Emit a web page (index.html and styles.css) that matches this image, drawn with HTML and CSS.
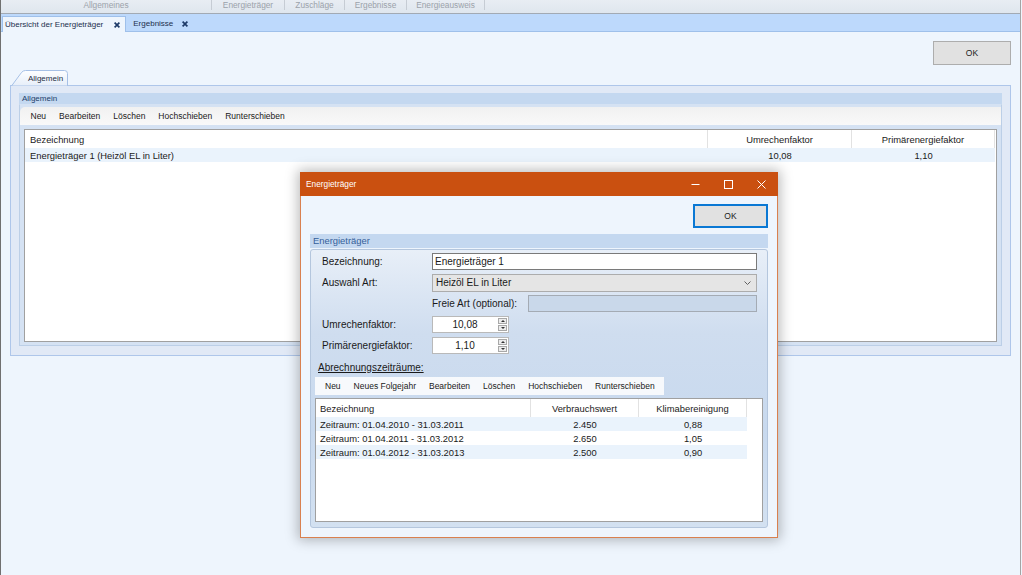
FILE: index.html
```html
<!DOCTYPE html>
<html>
  <head>
    <meta charset="UTF-8" />
    <title>Übersicht der Energieträger</title>
    <link rel="stylesheet" href="styles.css">
  </head>
  <body>
    <div class="app">
      <!-- Ribbon page strip -->
      <div class="menubar">
        <span class="menu-item menu-general">Allgemeines</span>
        <span class="menu-item menu-carrier">Energieträger</span>
        <span class="menu-item menu-extra">Zuschläge</span>
        <span class="menu-item menu-results">Ergebnisse</span>
        <span class="menu-item menu-cert">Energieausweis</span>
      </div>

      <!-- Document tabs -->
      <div class="doc-tabs">
        <div class="doc-tab active">
          <span>Übersicht der Energieträger</span>
          <svg class="tab-close" viewBox="0 0 6 6"><path d="M0.6 0.6 L5.4 5.4 M5.4 0.6 L0.6 5.4"/></svg>
        </div>
        <div class="doc-tab second">
          <span>Ergebnisse</span>
          <svg class="tab-close" viewBox="0 0 6 6"><path d="M0.6 0.6 L5.4 5.4 M5.4 0.6 L0.6 5.4"/></svg>
        </div>
      </div>

      <div class="workspace">
        <div class="top-actions">
          <button class="btn">OK</button>
        </div>

        <div class="tabctl">
          <div class="tabctl-head">
            <div class="tabctl-tab">
              <svg class="tab-shape" viewBox="0 0 57 16" preserveAspectRatio="none">
                <defs>
                  <linearGradient id="tabfill" x1="0" y1="0" x2="0" y2="1">
                    <stop offset="0" stop-color="#fdfeff"/>
                    <stop offset="1" stop-color="#e6eef9"/>
                  </linearGradient>
                </defs>
                <path d="M0.5 16 L10.5 2.5 Q12 0.5 14.5 0.5 L53.5 0.5 Q56.5 0.5 56.5 3.5 L56.5 16 Z" fill="url(#tabfill)" stroke="#a6c0e6"/>
              </svg>
              <span class="tab-label">Allgemein</span>
            </div>
          </div>
          <div class="tabctl-page">
            <div class="group-title">Allgemein</div>
            <div class="group-body">
              <div class="toolbar main-toolbar">
                <span class="tool">Neu</span>
                <span class="tool">Bearbeiten</span>
                <span class="tool">Löschen</span>
                <span class="tool">Hochschieben</span>
                <span class="tool">Runterschieben</span>
              </div>
              <div class="grid main-grid">
                <table>
                  <tr>
                    <th class="left col-name">Bezeichnung</th>
                    <th class="col-factor">Umrechenfaktor</th>
                    <th class="col-primary">Primärenergiefaktor</th>
                  </tr>
                  <tr class="alt">
                    <td class="left">Energieträger 1 (Heizöl EL in Liter)</td>
                    <td>10,08</td>
                    <td>1,10</td>
                  </tr>
                </table>
              </div>
            </div>
          </div>
        </div>
      </div>

      <!-- Modal dialog -->
      <div class="dialog">
        <div class="dlg-title">
          <span class="dlg-caption">Energieträger</span>
          <div class="dlg-controls">
            <span class="ctl"><svg viewBox="0 0 9 9"><path d="M0.5 4.5 H8.5"/></svg></span>
            <span class="ctl"><svg viewBox="0 0 9 9"><rect x="0.5" y="0.5" width="8" height="8"/></svg></span>
            <span class="ctl"><svg viewBox="0 0 9 9"><path d="M0.5 0.5 L8.5 8.5 M8.5 0.5 L0.5 8.5"/></svg></span>
          </div>
        </div>

        <div class="dlg-body">
          <div class="dlg-actions">
            <button class="btn btn-focus">OK</button>
          </div>
          <div class="group-title dlg-group">Energieträger</div>
          <div class="dlg-panel">
            <div class="form-row">
              <label class="form-label">Bezeichnung:</label>
              <div class="textbox wide">Energieträger 1</div>
            </div>
            <div class="form-row">
              <label class="form-label">Auswahl Art:</label>
              <div class="combo wide">
                <span>Heizöl EL in Liter</span>
                <svg class="combo-arrow" viewBox="0 0 7 4"><path d="M0.5 0.5 L3.5 3.5 L6.5 0.5"/></svg>
              </div>
            </div>
            <div class="form-row">
              <span class="form-label"></span>
              <label class="free-label">Freie Art (optional):</label>
              <div class="textbox disabled free"></div>
            </div>
            <div class="form-row">
              <label class="form-label">Umrechenfaktor:</label>
              <div class="spin">
                <span class="spin-value">10,08</span>
                <span class="spin-btns"><span class="spin-up"></span><span class="spin-down"></span></span>
              </div>
            </div>
            <div class="form-row">
              <label class="form-label">Primärenergiefaktor:</label>
              <div class="spin">
                <span class="spin-value">1,10</span>
                <span class="spin-btns"><span class="spin-up"></span><span class="spin-down"></span></span>
              </div>
            </div>

            <div class="section-label">Abrechnungszeiträume:</div>

            <div class="toolbar dlg-toolbar">
              <span class="tool">Neu</span>
              <span class="tool">Neues Folgejahr</span>
              <span class="tool">Bearbeiten</span>
              <span class="tool">Löschen</span>
              <span class="tool">Hochschieben</span>
              <span class="tool">Runterschieben</span>
            </div>

            <div class="grid dlg-grid">
              <table>
                <tr>
                  <th class="left col-period">Bezeichnung</th>
                  <th class="col-usage">Verbrauchswert</th>
                  <th class="col-climate">Klimabereinigung</th>
                </tr>
                <tr class="alt">
                  <td class="left">Zeitraum: 01.04.2010 - 31.03.2011</td>
                  <td>2.450</td>
                  <td>0,88</td>
                </tr>
                <tr>
                  <td class="left">Zeitraum: 01.04.2011 - 31.03.2012</td>
                  <td>2.650</td>
                  <td>1,05</td>
                </tr>
                <tr class="alt">
                  <td class="left">Zeitraum: 01.04.2012 - 31.03.2013</td>
                  <td>2.500</td>
                  <td>0,90</td>
                </tr>
              </table>
            </div>
          </div>
        </div>
      </div>
    </div>
  </body>
</html>
```

FILE: styles.css
```css
/* Reset */
html, body {
  margin: 0;
  padding: 0;
  width: 100%;
  height: 100%;
  overflow: hidden;
  background: #eef5fd;
  font-family: "Liberation Sans", Arial, sans-serif;
  color: #1a1a1a;
}

.app {
  position: relative;
  width: 1021px;
  height: 575px;
  box-sizing: border-box;
  border-left: 1px solid #707070;
  border-right: 1px solid #a4a4a4;
  background: #eef5fd;
}

/* Ribbon page strip */
.menubar {
  display: flex;
  height: 13px;
  background: linear-gradient(#e8edf3, #dfe6ee);
  border-bottom: 1px solid #a2aab4;
  font-size: 8.3px;
  color: #9ba2aa;
}

.menu-item {
  display: flex;
  justify-content: center;
  align-items: center;
  height: 10px;
  border-right: 1px solid #c6ccd4;
  box-sizing: border-box;
}

.menu-general { width: 211px; }
.menu-carrier { width: 73px; }
.menu-extra { width: 60px; }
.menu-results { width: 62px; }
.menu-cert { width: 78px; }

/* Document tabs */
.doc-tabs {
  display: flex;
  align-items: flex-end;
  height: 17px;
  background: #bdd9fc;
  border-bottom: 1px solid #9fc0ea;
  font-size: 8px;
}

.doc-tab {
  display: flex;
  align-items: center;
  height: 15px;
  margin-left: 1px;
  padding: 0 4px 0 6px;
  color: #1c2f4d;
}

.doc-tab.active {
  margin-bottom: -1px;
  padding: 0 5px 0 2px;
  background: #eef5fd;
  border: 1px solid #9fc0ea;
  border-bottom: none;
  height: 15px;
}

.tab-close {
  width: 6px;
  height: 6px;
  margin-left: 11px;
  stroke: #1d3a68;
  stroke-width: 1.7;
  fill: none;
}

.doc-tab.second .tab-close { margin-left: 9px; }

/* Workspace */
.workspace {
  padding: 0 9px 0 9px;
}

.top-actions {
  display: flex;
  justify-content: flex-end;
  padding-top: 9px;
}

.btn {
  width: 78px;
  height: 24px;
  margin: 0;
  padding: 0;
  background: #e1e1e1;
  border: 1px solid #adadad;
  font-family: "Liberation Sans", Arial, sans-serif;
  font-size: 8.5px;
  color: #1a1a1a;
}

.btn-focus {
  width: 75px;
  border: 2px solid #0a78d4;
}

/* Tab control */
.tabctl {
  margin-top: 5px;
}

.tabctl-head {
  height: 15px;
  padding-left: 1px;
}

.tabctl-tab {
  position: relative;
  width: 57px;
  height: 16px;
  z-index: 1;
}

.tab-shape {
  position: absolute;
  left: 0;
  top: 0;
  width: 57px;
  height: 16px;
}

.tab-label {
  position: relative;
  display: block;
  padding: 4px 0 0 17px;
  font-size: 8px;
  color: #1e2e44;
}

.tabctl-page {
  padding: 7px 8px 9px 8px;
  background: #e1e9f6;
  border: 1px solid #aec6ea;
}

.group-title {
  height: 11px;
  line-height: 11px;
  padding-left: 3px;
  background: #c4d8f0;
  font-size: 8px;
  color: #22406b;
}

.group-body {
  padding: 2px 0 3px 0;
  background: #d5e2f3;
  border: 1px solid #bccfe7;
  border-top-color: #d5e2f3;
}

/* Toolbars */
.toolbar {
  display: flex;
  align-items: center;
  height: 18px;
  font-size: 8.5px;
  color: #1a1a1a;
}

.tool {
  padding: 0 6.5px;
}

.main-toolbar {
  padding-left: 4px;
  background: linear-gradient(#f1f1f1, #f9f9f9);
  border-top-left-radius: 5px;
}

/* Grids */
.grid {
  background: #fff;
  border: 1px solid #a0a0a0;
  box-sizing: border-box;
  overflow: hidden;
}

.grid table {
  border-collapse: separate;
  border-spacing: 0;
  table-layout: fixed;
  font-size: 9.4px;
  color: #1a1a1a;
}

.grid th {
  box-sizing: border-box;
  font-weight: normal;
  text-align: center;
  padding: 0;
  border-right: 1px solid #e2e2e2;
}

.grid td {
  text-align: center;
  padding: 0;
  white-space: nowrap;
}

.grid .left {
  text-align: left;
  padding-left: 5px;
}

.grid tr.alt td {
  background: #eaf3fc;
}

.main-grid {
  height: 213px;
  margin: 4px 4px 0 4px;
}

.main-grid table { width: 970px; }
.main-grid th { height: 18px; }
.main-grid td { height: 14px; }
.main-grid .col-name { width: 683px; }
.main-grid .col-factor { width: 144px; }
.main-grid .col-primary { width: 143px; }

/* Dialog */
.dialog {
  position: absolute;
  left: 299px;
  top: 172px;
  width: 478px;
  box-sizing: border-box;
  border: 1px solid #d9804f;
  border-top: none;
  background: #eef5fd;
  box-shadow: 0 0 12px 2px rgba(0, 0, 0, 0.28);
}

.dlg-title {
  display: flex;
  align-items: center;
  height: 24px;
  margin: 0 -1px;
  background: #ca5010;
  color: #fff;
}

.dlg-caption {
  flex: 1;
  padding-left: 6px;
  font-size: 8.3px;
}

.dlg-controls {
  display: flex;
}

.ctl {
  display: flex;
  justify-content: center;
  align-items: center;
  width: 33px;
  height: 24px;
}

.ctl svg {
  width: 9px;
  height: 9px;
  stroke: #fff;
  stroke-width: 1;
  fill: none;
}

.dlg-body {
  padding: 8px 9px 9px 9px;
}

.dlg-actions {
  display: flex;
  justify-content: flex-end;
}

.dlg-group {
  height: 14px;
  line-height: 14px;
  margin-top: 6px;
  font-size: 9.4px;
  color: #34609a;
}

.dlg-panel {
  margin-top: 1px;
  padding: 3px 4px 5px 4px;
  border: 1px solid #b4c6dd;
  border-radius: 3px;
  background: linear-gradient(#e8eff8 0%, #cfddef 30%, #c8d9ee 65%, #d3e1f1 100%);
}

.form-row {
  display: flex;
  align-items: center;
  height: 17px;
  margin-top: 4px;
  padding-left: 7px;
  font-size: 10px;
}

.form-row:first-child {
  margin-top: 0;
}

.form-label {
  width: 110px;
  flex-shrink: 0;
}

.free-label {
  width: 96px;
  flex-shrink: 0;
}

.textbox {
  height: 17px;
  box-sizing: border-box;
  padding-left: 2px;
  line-height: 15px;
  background: #fff;
  border: 1px solid #7a7a7a;
}

.wide { width: 325px; }

.textbox.disabled {
  background: #c9d8ea;
  border-color: #a4abb4;
}

.free { width: 229px; }

.combo {
  display: flex;
  align-items: center;
  height: 18px;
  box-sizing: border-box;
  padding: 0 5px 0 3px;
  background: #e5e5e5;
  border: 1px solid #acacac;
}

.combo span {
  flex: 1;
}

.combo-arrow {
  width: 7px;
  height: 4px;
  stroke: #606060;
  stroke-width: 1;
  fill: none;
}

.spin {
  display: flex;
  align-items: center;
  width: 77px;
  height: 17px;
  box-sizing: border-box;
  background: #fff;
  border: 1px solid #b9b9b9;
}

.spin-value {
  width: 64px;
  text-align: center;
}

.spin-btns {
  display: flex;
  flex-direction: column;
  margin-left: 1px;
}

.spin-up,
.spin-down {
  position: relative;
  width: 9px;
  height: 6px;
  box-sizing: border-box;
  background: #ececec;
  border: 1px solid #a8a8a8;
}

.spin-down { margin-top: 1px; }

.spin-up::after,
.spin-down::after {
  content: "";
  position: absolute;
  left: 2px;
  width: 0;
  height: 0;
  border-left: 2px solid transparent;
  border-right: 2px solid transparent;
}

.spin-up::after {
  top: 1px;
  border-bottom: 2px solid #333;
}

.spin-down::after {
  top: 1px;
  border-top: 2px solid #333;
}

.section-label {
  margin-top: 8px;
  padding-left: 3px;
  line-height: 12px;
  font-size: 10px;
  text-decoration: underline;
}

.dlg-toolbar {
  width: 349px;
  margin-top: 3px;
  padding-left: 3.5px;
  box-sizing: border-box;
  background: #f7f9fc;
}

.dlg-grid {
  height: 124px;
  margin-top: 3px;
}

.dlg-grid table { width: 431px; }
.dlg-grid th { height: 18px; }
.dlg-grid td { height: 14px; }
.dlg-grid .left { padding-left: 4px; }
.dlg-grid .col-period { width: 215px; }
.dlg-grid .col-usage { width: 108px; }
.dlg-grid .col-climate { width: 108px; }
```
